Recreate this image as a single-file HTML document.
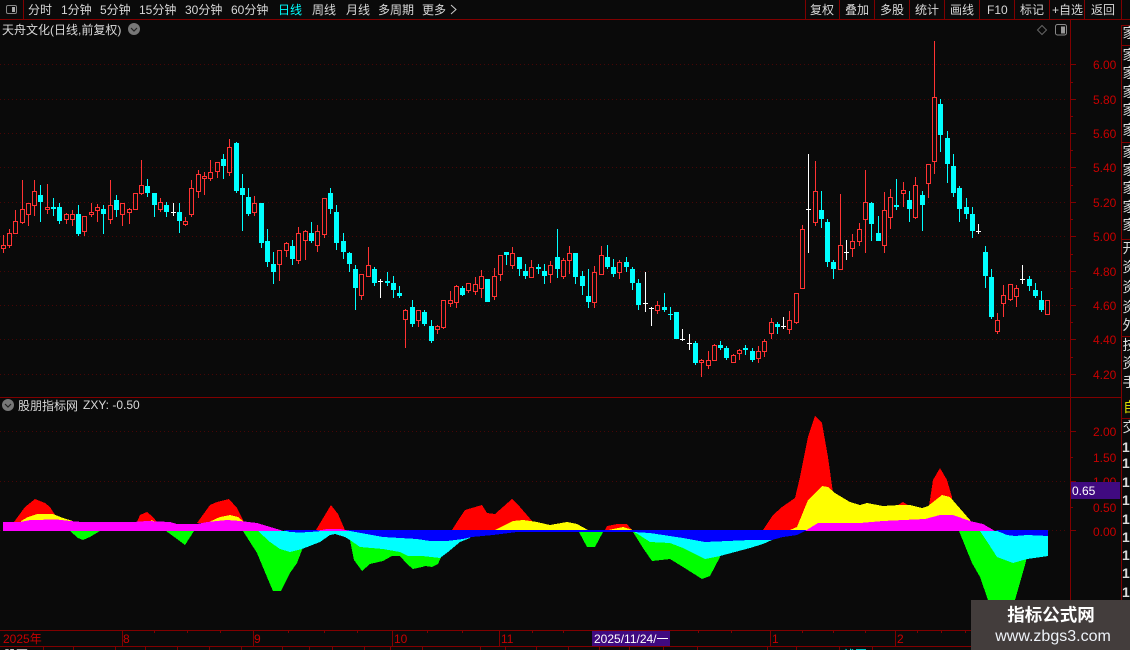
<!DOCTYPE html>
<html><head><meta charset="utf-8"><title>天舟文化</title>
<style>
html,body{margin:0;padding:0;background:#0a0a0a;width:1130px;height:650px;overflow:hidden}
svg{display:block}
text{font-family:"Liberation Sans","WenQuanYi Zen Hei","Noto Sans CJK SC",sans-serif;font-size:12px}
.t{fill:#d8d8d8}
.a{fill:#c80000}
.g{stroke:#480606;stroke-width:1;stroke-dasharray:1 3;fill:none}
.l{stroke:#800000;stroke-width:1;fill:none}
.s{fill:#dcdcdc;font-size:14px}
</style></head><body>
<svg width="1130" height="650" viewBox="0 0 1130 650" xmlns="http://www.w3.org/2000/svg">
<rect width="1130" height="650" fill="#0a0a0a"/>
<g shape-rendering="crispEdges">
<path class="g" d="M0 64.5H1068M0 99.5H1068M0 133.5H1068M0 167.5H1068M0 202.5H1068M0 236.5H1068M0 271.5H1068M0 305.5H1068M0 339.5H1068M0 374.5H1068M0 431.5H1068M0 481.5H1068M0 530.5H1068"/>
<path class="l" d="M0 19.5H1130M0 397.5H1121M0 630.5H1130M0 646.5H1130M1070.5 20V646M1121.5 25V646M1121 25.5H1130M1121 45.5H1130M1121 142.5H1130M1121 239.5H1130M1121 336.5H1130M1121 418.5H1130
M23.5 0V19M805.5 0V19M839.5 0V19M874.5 0V19M909.5 0V19M944.5 0V19M979.5 0V19M1014.5 0V19M1049.5 0V19M1084.5 0V19M1121.5 0V19
M1071 64.5h5M1071 82.5h2M1071 99.5h5M1071 116.5h2M1071 133.5h5M1071 150.5h2M1071 167.5h5M1071 185.5h2M1071 202.5h5M1071 219.5h2M1071 236.5h5M1071 254.5h2M1071 271.5h5M1071 288.5h2M1071 305.5h5M1071 322.5h2M1071 339.5h5M1071 357.5h2M1071 374.5h5
M1071 431.5h5M1071 457.5h2M1071 481.5h5M1071 507.5h2M1071 530.5h5
M122.5 631V646M253.5 631V646M392.5 631V646M499.5 631V646M770.5 631V646M895.5 631V646
M154.5 631v2M187.5 631v2M220.5 631v2M288.5 631v2M324.5 631v2M357.5 631v2M427.5 631v2M462.5 631v2M532.5 631v2M563.5 631v2M698.5 631v2M731.5 631v2M802.5 631v2M833.5 631v2M865.5 631v2M917.5 631v2M941.5 631v2M965.5 631v2
M43.5 647V650M73.5 647V650M115.5 647V650M145.5 647V650M177.5 647V650M209.5 647V650M241.5 647V650M282.5 647V650M309.5 647V650M332.5 647V650M364.5 647V650M390.5 647V650M422.5 647V650M480.5 647V650M505.5 647V650M536.5 647V650M568.5 647V650M599.5 647V650M629.5 647V650M663.5 647V650M697.5 647V650M767.5 647V650M796.5 647V650M839.5 647V650M872.5 647V650"/>

<!-- red wicks -->
<path fill="none" stroke="#ff3333" d="M3.5 235V253M9.5 229V248M15.5 210V234M22.5 180V224M28.5 203V226M34.5 180V216M47.5 184V214M66.5 213V224M72.5 210V226M84.5 216V236M91.5 203V217M97.5 204V222M110.5 180V224M122.5 203V226M129.5 208V224M135.5 193V210M141.5 160V195M160.5 198V212M185.5 217V226M191.5 180V217M198.5 170V198M204.5 172V195M210.5 160V181M217.5 162V178M229.5 139V176M254.5 196V216M279.5 250V281M286.5 242V257M298.5 227V264M305.5 230V260M317.5 225V252M324.5 198V238M361.5 274V300M368.5 247V277M405.5 309V348M418.5 310V327M437.5 325V334M443.5 300V329M450.5 291V307M456.5 285V308M468.5 283V293M475.5 277V295M481.5 270V298M494.5 268V300M500.5 255V281M512.5 247V269M531.5 260V278M550.5 261V283M563.5 258V279M569.5 246V274M594.5 266V308M601.5 246V275M619.5 260V279M657.5 301V314M701.5 359V377M708.5 351V369M714.5 344V361M733.5 354V363M739.5 349V360M758.5 346V363M764.5 339V357M771.5 318V339M789.5 311V334M796.5 293V324M802.5 225V289M815.5 161V226M840.5 194V270M852.5 234V257M859.5 223V246M865.5 170V253M884.5 192V253M890.5 189V229M903.5 182V207M915.5 177V219M928.5 164V198M934.5 41V174M997.5 313V334M1003.5 285V317M1010.5 284V301M1016.5 285V307M1047.5 300V315"/>
<!-- red bodies -->
<path fill="#0a0a0a" stroke="#ff3333" d="M1.5 245.5h4V248.5h-4zM7.5 233.5h4V245.5h-4zM13.5 221.5h4V233.5h-4zM20.5 209.5h4V222.5h-4zM26.5 203.5h4V214.5h-4zM32.5 191.5h4V205.5h-4zM45.5 207.5h4V209.5h-4zM64.5 214.5h4V219.5h-4zM70.5 214.5h4V219.5h-4zM82.5 216.5h4V231.5h-4zM89.5 212.5h4V214.5h-4zM95.5 207.5h4V210.5h-4zM108.5 205.5h4V219.5h-4zM120.5 203.5h4V214.5h-4zM127.5 209.5h4V212.5h-4zM133.5 193.5h4V209.5h-4zM139.5 185.5h4V193.5h-4zM158.5 202.5h4V209.5h-4zM183.5 221.5h4V224.5h-4zM189.5 188.5h4V214.5h-4zM196.5 174.5h4V191.5h-4zM202.5 176.5h4V178.5h-4zM208.5 172.5h4V178.5h-4zM215.5 162.5h4V171.5h-4zM227.5 147.5h4V172.5h-4zM252.5 203.5h4V212.5h-4zM277.5 250.5h4V264.5h-4zM284.5 243.5h4V250.5h-4zM296.5 233.5h4V260.5h-4zM303.5 231.5h4V240.5h-4zM315.5 231.5h4V245.5h-4zM322.5 198.5h4V234.5h-4zM359.5 274.5h4V295.5h-4zM366.5 265.5h4V276.5h-4zM403.5 310.5h4V319.5h-4zM416.5 310.5h4V320.5h-4zM435.5 326.5h4V329.5h-4zM441.5 300.5h4V327.5h-4zM448.5 300.5h4V303.5h-4zM454.5 286.5h4V302.5h-4zM466.5 283.5h4V290.5h-4zM473.5 284.5h4V291.5h-4zM479.5 276.5h4V288.5h-4zM492.5 276.5h4V296.5h-4zM498.5 255.5h4V274.5h-4zM510.5 253.5h4V265.5h-4zM529.5 267.5h4V277.5h-4zM548.5 265.5h4V274.5h-4zM561.5 260.5h4V276.5h-4zM567.5 253.5h4V260.5h-4zM592.5 272.5h4V302.5h-4zM599.5 255.5h4V274.5h-4zM617.5 262.5h4V272.5h-4zM655.5 305.5h4V310.5h-4zM699.5 360.5h4V362.5h-4zM706.5 360.5h4V365.5h-4zM712.5 345.5h4V360.5h-4zM731.5 355.5h4V362.5h-4zM737.5 350.5h4V353.5h-4zM756.5 351.5h4V358.5h-4zM762.5 341.5h4V351.5h-4zM769.5 322.5h4V333.5h-4zM787.5 320.5h4V329.5h-4zM794.5 293.5h4V322.5h-4zM800.5 229.5h4V288.5h-4zM813.5 191.5h4V222.5h-4zM838.5 245.5h4V269.5h-4zM850.5 241.5h4V248.5h-4zM857.5 229.5h4V241.5h-4zM863.5 202.5h4V219.5h-4zM882.5 210.5h4V245.5h-4zM888.5 197.5h4V217.5h-4zM901.5 190.5h4V193.5h-4zM913.5 185.5h4V217.5h-4zM926.5 164.5h4V183.5h-4zM932.5 97.5h4V161.5h-4zM995.5 320.5h4V331.5h-4zM1001.5 295.5h4V303.5h-4zM1008.5 284.5h4V299.5h-4zM1014.5 288.5h4V296.5h-4zM1045.5 300.5h4V314.5h-4z"/>
<!-- cyan wicks -->
<path fill="none" stroke="#00ffff" d="M40.5 185V222M53.5 198V216M59.5 203V224M78.5 205V236M103.5 205V234M116.5 195V217M147.5 179V197M154.5 193V217M166.5 202V217M179.5 203V233M223.5 154V179M236.5 142V193M242.5 174V231M248.5 188V216M261.5 203V248M267.5 229V267M273.5 252V284M292.5 240V265M311.5 222V243M330.5 188V214M336.5 205V250M343.5 233V259M349.5 252V272M355.5 265V310M374.5 267V286M387.5 272V286M393.5 276V298M399.5 286V298M412.5 300V327M424.5 310V326M431.5 320V343M462.5 286V296M487.5 279V302M506.5 252V265M519.5 257V276M525.5 264V279M538.5 264V274M544.5 264V284M557.5 229V278M575.5 253V284M582.5 271V295M588.5 269V308M607.5 245V269M613.5 259V277M626.5 257V272M632.5 267V290M638.5 279V310M664.5 293V312M670.5 307V320M676.5 312V339M695.5 341V365M720.5 341V350M726.5 346V360M745.5 345V355M752.5 348V362M777.5 322V334M821.5 191V228M827.5 219V267M833.5 260V279M871.5 202V241M878.5 216V241M896.5 179V210M909.5 191V222M922.5 191V231M940.5 99V152M947.5 131V183M953.5 154V197M959.5 186V222M966.5 198V219M972.5 207V238M985.5 246V288M991.5 269V319M1029.5 276V291M1035.5 283V298M1041.5 291V312"/>
<!-- cyan bodies -->
<path fill="#00ffff" d="M38 195h5V202h-5zM51 207h5V209h-5zM57 207h5V221h-5zM76 214h5V234h-5zM101 209h5V214h-5zM114 200h5V210h-5zM145 186h5V193h-5zM152 193h5V205h-5zM164 205h5V212h-5zM177 212h5V221h-5zM221 159h5V166h-5zM234 143h5V191h-5zM240 188h5V195h-5zM246 197h5V214h-5zM259 203h5V243h-5zM265 241h5V262h-5zM271 264h5V272h-5zM290 246h5V259h-5zM309 233h5V241h-5zM328 193h5V209h-5zM334 212h5V243h-5zM341 241h5V252h-5zM347 253h5V264h-5zM353 269h5V288h-5zM372 269h5V283h-5zM385 281h5V283h-5zM391 283h5V290h-5zM397 293h5V296h-5zM410 307h5V324h-5zM422 312h5V324h-5zM429 326h5V341h-5zM460 288h5V295h-5zM485 279h5V302h-5zM504 252h5V255h-5zM517 257h5V269h-5zM523 271h5V276h-5zM536 267h5V269h-5zM542 271h5V276h-5zM555 257h5V269h-5zM573 253h5V277h-5zM580 276h5V286h-5zM586 296h5V302h-5zM605 257h5V267h-5zM611 267h5V274h-5zM624 262h5V267h-5zM630 269h5V283h-5zM636 283h5V305h-5zM662 307h5V310h-5zM668 314h5V315h-5zM674 312h5V339h-5zM693 343h5V363h-5zM718 345h5V348h-5zM724 348h5V358h-5zM743 348h5V350h-5zM750 351h5V360h-5zM775 324h5V327h-5zM819 210h5V219h-5zM825 222h5V262h-5zM831 262h5V269h-5zM869 203h5V224h-5zM876 233h5V241h-5zM894 205h5V207h-5zM907 200h5V209h-5zM920 195h5V205h-5zM938 104h5V135h-5zM945 138h5V164h-5zM951 166h5V193h-5zM957 188h5V209h-5zM964 207h5V214h-5zM970 214h5V231h-5zM983 252h5V276h-5zM989 277h5V317h-5zM1027 279h5V286h-5zM1033 290h5V296h-5zM1039 300h5V310h-5z"/>
<!-- white doji -->
<path fill="none" stroke="#ffffff" d="M173.5 203V216M171 212.5h5M380.5 279V298M378 281.5h5M645.5 272V312M643 303.5h5M651.5 307V326M649 308.5h5M682.5 329V341M680 339.5h5M689.5 334V350M687 343.5h5M783.5 317V329M781 326.5h5M808.5 154V253M806 209.5h5M846.5 240V260M844 252.5h5M978.5 224V234M976 231.5h5M1022.5 265V284M1020 279.5h5"/>

<!-- indicator: green -->
<g fill="#00ff00">
<polygon points="70,531 78,538 83,540 90,537 100,531"/>
<polygon points="166,531 177,539 185,545 194,531"/>
<polygon points="243,531 257,553 267,577 273,591 281,591 290,573 297,563 302,550 310,531"/>
<polygon points="345,531 345,537 350,540 354,560 362,571 370,564 383,561 392,556 400,556 407,564 413,569 422,567 425,566 432,567 438,564 442,555 450,550 460,531"/>
<polygon points="579,532 587,547 595,547 603,532"/>
<polygon points="633,532 643,548 652,561 670,559 683,567 702,579 710,576 720,557 725,531"/>
<polygon points="959,531 972,563 980,577 988,600 995,615 1008,615 1015,600 1025,565 1027,557 1030,531"/>
</g>
<!-- indicator: cyan -->
<g fill="#00ffff">
<polygon points="258,531 270,542 280,549 290,552 302,549 320,542 330,535 335,534 345,537 350,540 360,547 383,549 400,552 408,556 422,556 440,558 448,552 460,542 470,538 475,531"/>
<polygon points="633,531 650,542 670,543 683,548 705,559 720,556 750,548 763,544 772,540 780,531"/>
<polygon points="980,531 988,543 997,557 1013,563 1027,559 1048,556 1048,531"/>
</g>
<!-- indicator: red -->
<g fill="#ff0000">
<polygon points="14,522 25,507 35,499 45,503 50,507 57,518 60,522"/>
<polygon points="137,522 140,515 147,512 153,517 157,522"/>
<polygon points="197,523 210,505 217,502 229,499 237,508 244,522"/>
<polygon points="316,530 331,505 338,514 345,530"/>
<polygon points="452,530 457,522 465,510 482,505 487,513 495,514 512,499 520,507 533,522 540,530"/>
<polygon points="605,530 607,526 617,524 627,524 630,528 632,530"/>
<polygon points="763,530 773,515 782,507 795,498 800,477 808,437 815,416 822,423 828,457 833,493 836,530"/>
<polygon points="898,505 903,502 908,505 908,510 898,510"/>
<polygon points="929,506 933,480 940,468 947,480 952,497 952,510 929,510"/>
</g>
<!-- indicator: yellow -->
<g fill="#ffff00">
<polygon points="21,521 28,517 37,514 53,514 63,518 73,521 74,524 21,524"/>
<polygon points="151,520 156,522 151,523"/>
<polygon points="209,522 220,517 230,515 238,517 244,522 244,525 209,525"/>
<polygon points="495,530 513,521 523,520 537,522 550,525 567,522 577,524 588,530"/>
<polygon points="608,530 623,527 633,530"/>
<polygon points="790,530 797,527 808,500 822,486 828,487 835,493 850,502 860,505 867,503 883,506 900,505 910,505 922,508 928,506 942,495 950,497 970,520 975,530"/>
</g>
<!-- indicator: blue -->
<polygon fill="#0000ff" points="283,530 807,530 797,535 783,537 772,540 750,540 705,542 683,538 650,533 633,532 517,532 493,535 472,537 463,539 447,541 430,541 417,539 383,537 350,531 322,531 310,532 300,532.5 290,532"/>
<polygon fill="#0000ff" points="995,530 1048,530 1048,536 1027,535 1015,536 1007,535"/>
<!-- indicator: magenta -->
<g fill="#ff00ff">
<polygon points="3,522 20,522 30,520 57,519.5 70,521 82,522 133,522 147,521 170,522 177,524 197,524 207,522 227,520 240,521 257,523 267,526 277,529 283,531 3,531"/>
<polygon points="316,531 327,529 340,529 350,531"/>
<polygon points="805,531 818,523 830,523 860,523 883,521 925,519 940,515 953,515 970,521 983,524 995,531"/>
</g>

<rect x="592" y="631" width="78" height="15" fill="#400a80"/>
</g>

<!-- toolbar icon -->
<rect x="6.5" y="5.5" width="10" height="8" rx="1.5" fill="none" stroke="#888"/>
<rect x="12" y="7" width="3" height="5" fill="#aaa"/>
<rect x="1055.5" y="24.5" width="11" height="10.5" rx="2" fill="none" stroke="#888"/>
<rect x="1061" y="26.5" width="4" height="7" fill="#999"/>
<path d="M1042 25.5l4.5 4.5-4.5 4.5-4.5-4.5z" fill="none" stroke="#666"/>
<circle cx="134" cy="29" r="6" fill="#777"/><path d="M131 28l3 3 3-3" fill="none" stroke="#222" stroke-width="1.2"/>
<circle cx="8" cy="405" r="6" fill="#777"/><path d="M5 404l3 3 3-3" fill="none" stroke="#222" stroke-width="1.2"/>
<path d="M451 5l5 4.5-5 4.5" fill="none" stroke="#ccc"/>

<!-- toolbar text -->
<g class="t">
<text class="t" x="28" y="14">分时</text>
<text class="t" x="61" y="14">1分钟</text>
<text class="t" x="100" y="14">5分钟</text>
<text class="t" x="139" y="14">15分钟</text>
<text class="t" x="185" y="14">30分钟</text>
<text class="t" x="231" y="14">60分钟</text>
<text x="278" y="14" fill="#00ffff">日线</text>
<text class="t" x="312" y="14">周线</text>
<text class="t" x="346" y="14">月线</text>
<text class="t" x="378" y="14">多周期</text>
<text class="t" x="422" y="14">更多</text>
<text class="t" x="810" y="14">复权</text>
<text class="t" x="845" y="14">叠加</text>
<text class="t" x="880" y="14">多股</text>
<text class="t" x="915" y="14">统计</text>
<text class="t" x="950" y="14">画线</text>
<text class="t" x="987" y="14">F10</text>
<text class="t" x="1020" y="14">标记</text>
<text class="t" x="1052" y="14">+自选</text>
<text class="t" x="1091" y="14">返回</text>
<text class="t" x="2" y="34">天舟文化(日线,前复权)</text>
<text class="t" x="18" y="410">股朋指标网</text>
<text class="t" x="83" y="409">ZXY: -0.50</text>
</g>

<!-- axis labels -->
<text class="a" x="1093" y="69">6.00</text>
<text class="a" x="1093" y="104">5.80</text>
<text class="a" x="1093" y="138">5.60</text>
<text class="a" x="1093" y="172">5.40</text>
<text class="a" x="1093" y="207">5.20</text>
<text class="a" x="1093" y="241">5.00</text>
<text class="a" x="1093" y="276">4.80</text>
<text class="a" x="1093" y="310">4.60</text>
<text class="a" x="1093" y="344">4.40</text>
<text class="a" x="1093" y="379">4.20</text>
<text class="a" x="1093" y="436">2.00</text>
<text class="a" x="1093" y="462">1.50</text>
<text class="a" x="1093" y="486">1.00</text>
<text class="a" x="1093" y="512">0.50</text>
<text class="a" x="1093" y="536">0.00</text>
<rect x="1071" y="482" width="49" height="17" fill="#400a80"/>
<text x="1072" y="495" fill="#fff">0.65</text>

<text class="a" x="3" y="643">2025年</text>
<text class="a" x="123" y="643">8</text>
<text class="a" x="254" y="643">9</text>
<text class="a" x="394" y="643">10</text>
<text class="a" x="501" y="643">11</text>
<text x="594" y="643" fill="#fff">2025/11/24/一</text>
<text class="a" x="772" y="643">1</text>
<text class="a" x="897" y="643">2</text>

<!-- sidebar clipped text -->
<text class="s" x="1122.5" y="38">家</text>
<text class="s" x="1122.5" y="60">家</text>
<text class="s" x="1122.5" y="78">家</text>
<text class="s" x="1122.5" y="97">家</text>
<text class="s" x="1122.5" y="115">家</text>
<text class="s" x="1122.5" y="135">家</text>
<text class="s" x="1122.5" y="157">家</text>
<text class="s" x="1122.5" y="175">家</text>
<text class="s" x="1122.5" y="193">家</text>
<text class="s" x="1122.5" y="212">家</text>
<text class="s" x="1122.5" y="230">家</text>
<text class="s" x="1122.5" y="253">开</text>
<text class="s" x="1122.5" y="272">资</text>
<text class="s" x="1122.5" y="292">资</text>
<text class="s" x="1122.5" y="312">资</text>
<text class="s" x="1122.5" y="330">外</text>
<text class="s" x="1122.5" y="350">技</text>
<text class="s" x="1122.5" y="368">资</text>
<text class="s" x="1122.5" y="387">手</text>
<text x="1123" y="412" fill="#d8d800" style="font-size:14px">自</text>
<text class="s" x="1122.5" y="432">交</text>
<text class="s" x="1122" y="452" font-weight="bold">1</text>
<text class="s" x="1122" y="468" font-weight="bold">1</text>
<text class="s" x="1122" y="487" font-weight="bold">1</text>
<text class="s" x="1122" y="505" font-weight="bold">1</text>
<text class="s" x="1122" y="524" font-weight="bold">1</text>
<text class="s" x="1122" y="542" font-weight="bold">1</text>
<text class="s" x="1122" y="560" font-weight="bold">1</text>
<text class="s" x="1122" y="578" font-weight="bold">1</text>
<text class="s" x="1122" y="597" font-weight="bold">1</text>

<!-- bottom clipped -->
<text x="4" y="659" fill="#ddd">股票</text>
<text x="843" y="659" fill="#00ffff">线图</text>

<!-- watermark -->
<rect x="971" y="600" width="159" height="50" fill="#433d3c"/>
<text x="1051" y="621" text-anchor="middle" fill="#fff" font-weight="bold" style="font-family:'Noto Sans CJK SC','WenQuanYi Zen Hei',sans-serif;font-size:17.5px;font-weight:bold">指标公式网</text>
<text x="1053" y="641" text-anchor="middle" fill="#eef2f8" style="font-size:16px">www.zbgs3.com</text>
</svg>
</body></html>
